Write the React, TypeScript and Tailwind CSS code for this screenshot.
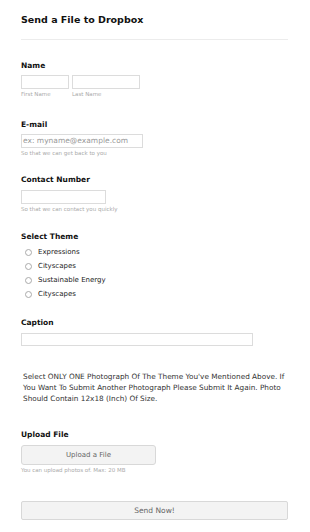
const themes = ['Expressions', 'Cityscapes', 'Sustainable Energy', 'Cityscapes'];

function Label({ children, className = '' }: { children: React.ReactNode; className?: string }) {
  return (
    <div className={`text-[7.5px] leading-[10px] font-bold text-[#111] ${className}`}>{children}</div>
  );
}

function Hint({ children, className = '' }: { children: React.ReactNode; className?: string }) {
  return <div className={`text-[5.5px] leading-[7px] text-[#aaa] ${className}`}>{children}</div>;
}

export default function App() {
  return (
    <div className="w-[310px] h-[532px] bg-white font-['DejaVu_Sans',sans-serif] overflow-hidden">
      <div className="px-[21px] w-[309px]">
        <h1 className="mt-[14px] text-[9.5px] leading-[12px] font-bold text-[#111]">Send a File to Dropbox</h1>
        <div className="mt-[13px] h-px bg-[#ececec]" />

        <Label className="mt-[21px]">Name</Label>
        <div className="mt-[4px] flex gap-[3px]">
          <div className="w-[48px] h-[14px] border border-[#dcdcdc]" />
          <div className="w-[68px] h-[14px] border border-[#dcdcdc]" />
        </div>
        <div className="mt-[2px] flex gap-[3px]">
          <Hint className="w-[48px]">First Name</Hint>
          <Hint>Last Name</Hint>
        </div>

        <Label className="mt-[22px]">E-mail</Label>
        <div className="mt-[4px] w-[122px] h-[14px] border border-[#dcdcdc] flex items-center pl-[1px] text-[7.5px] text-[#999]">
          ex: myname@example.com
        </div>
        <Hint className="mt-[2px]">So that we can get back to you</Hint>

        <Label className="mt-[18px]">Contact Number</Label>
        <div className="mt-[5px] w-[85px] h-[14px] border border-[#dcdcdc]" />
        <Hint className="mt-[2px]">So that we can contact you quickly</Hint>

        <Label className="mt-[19px]">Select Theme</Label>
        <div className="mt-[3px]">
          {themes.map((t, i) => (
            <div key={i} className="flex items-center h-[14px] pl-[4px]">
              <span className="w-[7px] h-[7px] rounded-full border border-[#aaa] bg-white" />
              <span className="ml-[6px] text-[7px] text-[#222]">{t}</span>
            </div>
          ))}
        </div>

        <Label className="mt-[17px]">Caption</Label>
        <div className="mt-[5px] w-[232px] h-[13px] border border-[#dcdcdc]" />

        <p className="mt-[25px] ml-[2px] w-[264px] text-[7.3px] leading-[11px] text-[#333]">
          Select ONLY ONE Photograph Of The Theme You've Mentioned Above. If You Want To Submit Another
          Photograph Please Submit It Again. Photo Should Contain 12x18 (Inch) Of Size.
        </p>

        <Label className="mt-[26px]">Upload File</Label>
        <button className="mt-[4px] w-[135px] h-[20px] rounded-[3px] border border-[#d8d8d8] bg-[#f3f3f3] text-[7px] text-[#666]">
          Upload a File
        </button>
        <Hint className="mt-[2px]">You can upload photos of. Max: 20 MB</Hint>

        <button className="mt-[27px] w-[267px] h-[19px] rounded-[2px] border border-[#d8d8d8] bg-[#f3f3f3] text-[7.5px] text-[#666]">
          Send Now!
        </button>
      </div>
    </div>
  );
}
